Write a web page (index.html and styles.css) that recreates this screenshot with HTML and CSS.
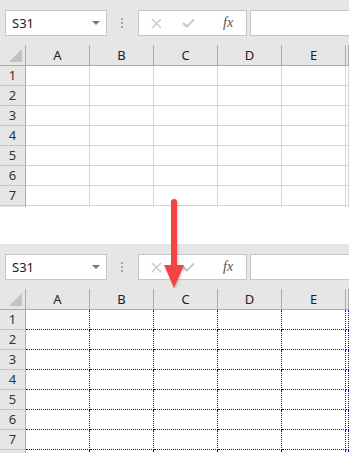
FILE: index.html
```html
<!DOCTYPE html>
<html lang="en">
<head>
    <meta charset="UTF-8">
    <meta name="viewport" content="width=device-width, initial-scale=1.0">
    <title>Page Break Preview</title>
    <link rel="stylesheet" href="styles.css">
</head>
<body>
    <div class="page">

        <!-- Normal view -->
        <div class="sheet sheet-top">
            <div class="toolbar">
                <div class="namebox">S31<span class="drop"></span></div>
                <div class="dots"><i></i><i></i><i></i></div>
                <div class="fxbox">
                    <svg class="ico-x" width="11" height="11" viewBox="0 0 11 11"><path d="M1 1L10 10M10 1L1 10" stroke="#c6c6c6" stroke-width="1.4"/></svg>
                    <svg class="ico-ok" width="13" height="10" viewBox="0 0 13 10"><path d="M1 5L4.8 8.6L12 1.4" stroke="#c6c6c6" stroke-width="2" fill="none"/></svg>
                    <span class="fx">fx</span>
                </div>
                <div class="fbar"></div>
            </div>
            <div class="grid">
                <div class="row head"><div class="rh corner"><svg width="13" height="13" viewBox="0 0 13 13"><path d="M13 0V13H0Z" fill="#c2c2c2"/></svg></div><div class="c">A</div><div class="c">B</div><div class="c">C</div><div class="c">D</div><div class="c">E</div><div class="c"></div></div>
                <div class="row"><div class="rh">1</div><div class="c"></div><div class="c"></div><div class="c"></div><div class="c"></div><div class="c"></div><div class="c"></div></div>
                <div class="row"><div class="rh">2</div><div class="c"></div><div class="c"></div><div class="c"></div><div class="c"></div><div class="c"></div><div class="c"></div></div>
                <div class="row"><div class="rh">3</div><div class="c"></div><div class="c"></div><div class="c"></div><div class="c"></div><div class="c"></div><div class="c"></div></div>
                <div class="row"><div class="rh">4</div><div class="c"></div><div class="c"></div><div class="c"></div><div class="c"></div><div class="c"></div><div class="c"></div></div>
                <div class="row"><div class="rh">5</div><div class="c"></div><div class="c"></div><div class="c"></div><div class="c"></div><div class="c"></div><div class="c"></div></div>
                <div class="row"><div class="rh">6</div><div class="c"></div><div class="c"></div><div class="c"></div><div class="c"></div><div class="c"></div><div class="c"></div></div>
                <div class="row"><div class="rh">7</div><div class="c"></div><div class="c"></div><div class="c"></div><div class="c"></div><div class="c"></div><div class="c"></div></div>
                <div class="row"><div class="rh"></div><div class="c"></div><div class="c"></div><div class="c"></div><div class="c"></div><div class="c"></div><div class="c"></div></div>
            </div>
        </div>

        <!-- With page breaks shown -->
        <div class="sheet sheet-bottom">
            <div class="toolbar">
                <div class="namebox">S31<span class="drop"></span></div>
                <div class="dots"><i></i><i></i><i></i></div>
                <div class="fxbox">
                    <svg class="ico-x" width="11" height="11" viewBox="0 0 11 11"><path d="M1 1L10 10M10 1L1 10" stroke="#c6c6c6" stroke-width="1.4"/></svg>
                    <svg class="ico-ok" width="13" height="10" viewBox="0 0 13 10"><path d="M1 5L4.8 8.6L12 1.4" stroke="#c6c6c6" stroke-width="2" fill="none"/></svg>
                    <span class="fx">fx</span>
                </div>
                <div class="fbar"></div>
            </div>
            <div class="grid dotted">
                <div class="row head"><div class="rh corner"><svg width="13" height="13" viewBox="0 0 13 13"><path d="M13 0V13H0Z" fill="#c2c2c2"/></svg></div><div class="c">A</div><div class="c">B</div><div class="c">C</div><div class="c">D</div><div class="c">E</div><div class="c"></div></div>
                <div class="row"><div class="rh">1</div><div class="c"></div><div class="c"></div><div class="c"></div><div class="c"></div><div class="c"></div><div class="c"></div></div>
                <div class="row"><div class="rh">2</div><div class="c"></div><div class="c"></div><div class="c"></div><div class="c"></div><div class="c"></div><div class="c"></div></div>
                <div class="row"><div class="rh">3</div><div class="c"></div><div class="c"></div><div class="c"></div><div class="c"></div><div class="c"></div><div class="c"></div></div>
                <div class="row"><div class="rh">4</div><div class="c"></div><div class="c"></div><div class="c"></div><div class="c"></div><div class="c"></div><div class="c"></div></div>
                <div class="row"><div class="rh">5</div><div class="c"></div><div class="c"></div><div class="c"></div><div class="c"></div><div class="c"></div><div class="c"></div></div>
                <div class="row"><div class="rh">6</div><div class="c"></div><div class="c"></div><div class="c"></div><div class="c"></div><div class="c"></div><div class="c"></div></div>
                <div class="row"><div class="rh">7</div><div class="c"></div><div class="c"></div><div class="c"></div><div class="c"></div><div class="c"></div><div class="c"></div></div>
                <div class="row"><div class="rh"></div><div class="c"></div><div class="c"></div><div class="c"></div><div class="c"></div><div class="c"></div><div class="c"></div></div>
            </div>
        </div>

        <!-- Red arrow over both panels -->
        <svg class="arrow" width="349" height="453" viewBox="0 0 349 453">
            <rect x="171" y="199" width="6" height="72" rx="3" fill="#f54343"/>
            <path d="M164 265H184L174 288Z" fill="#f54343"/>
        </svg>
    </div>
</body>
</html>
```

FILE: styles.css
```css
body {
    margin: 0;
    background-color: #FFFFFF;
    font-family: "Noto Sans", "Open Sans", sans-serif;
    overflow: hidden;
}
.page {
    position: relative;
    width: 349px;
    height: 453px;
    overflow: hidden;
}
.sheet {
    background-color: #E6E6E6;
    overflow: hidden;
}
.sheet-top {
    height: 207px;
}
.sheet-bottom {
    margin-top: 37px;
    height: 209px;
}
.toolbar {
    display: flex;
    align-items: flex-start;
    height: 45px;
    box-sizing: border-box;
    padding: 10px 0 0 5px;
}
.namebox {
    width: 102px;
    height: 26px;
    box-sizing: border-box;
    border: 1px solid #C6C6C6;
    background-color: #FFFFFF;
    display: flex;
    align-items: center;
    padding-left: 6px;
    font-size: 13px;
    color: #222;
}
.drop {
    margin-left: auto;
    margin-right: 6px;
    width: 0;
    height: 0;
    border-left: 4px solid transparent;
    border-right: 4px solid transparent;
    border-top: 4px solid #777;
}
.dots {
    display: flex;
    flex-direction: column;
    gap: 2px;
    margin: 8px 15px 0 14px;
}
.dots i {
    display: block;
    width: 2px;
    height: 2px;
    background-color: #A6A6A6;
}
.fxbox {
    width: 109px;
    height: 26px;
    box-sizing: border-box;
    border: 1px solid #C6C6C6;
    background-color: #FFFFFF;
    display: flex;
    align-items: center;
    padding-left: 12px;
}
.ico-ok {
    margin-left: 20px;
}
.fx {
    margin-left: 28px;
    font-family: "Liberation Serif", serif;
    font-style: italic;
    font-size: 14px;
    color: #555;
}
.fbar {
    flex: 1;
    margin-left: 3px;
    height: 26px;
    box-sizing: border-box;
    border: 1px solid #C6C6C6;
    border-right: none;
    background-color: #FFFFFF;
}
.grid {
    background-color: #FFFFFF;
}
.row {
    display: flex;
    height: 20px;
}
.row.head {
    height: 21px;
    background-color: #E6E6E6;
}
.rh {
    width: 26px;
    flex: none;
    box-sizing: border-box;
    border-right: 1px solid #ABABAB;
    border-bottom: 1px solid #C6C6C6;
    background-color: #E6E6E6;
    text-align: center;
    font-size: 13px;
    line-height: 19px;
    color: #333;
}
.c {
    width: 64px;
    flex: none;
    box-sizing: border-box;
    border-right: 1px solid #D4D4D4;
    border-bottom: 1px solid #D4D4D4;
}
.c:last-child {
    flex: 1;
}
.head .rh {
    border-bottom: 1px solid #ABABAB;
    display: flex;
    align-items: flex-end;
    justify-content: flex-end;
    padding: 0 3px 3px 0;
}
.head .c {
    border-right: 1px solid #ABABAB;
    border-bottom: 1px solid #ABABAB;
    text-align: center;
    font-size: 13px;
    line-height: 21px;
    color: #222;
}
.dotted .row:not(.head) .c {
    border-right: 1px dotted #0A0AE6;
    border-bottom: 1px dotted #0A0AE6;
}
.arrow {
    position: absolute;
    left: 0;
    top: 0;
    pointer-events: none;
    filter: drop-shadow(1px 1px 1px rgba(0, 0, 0, 0.2));
}
```
